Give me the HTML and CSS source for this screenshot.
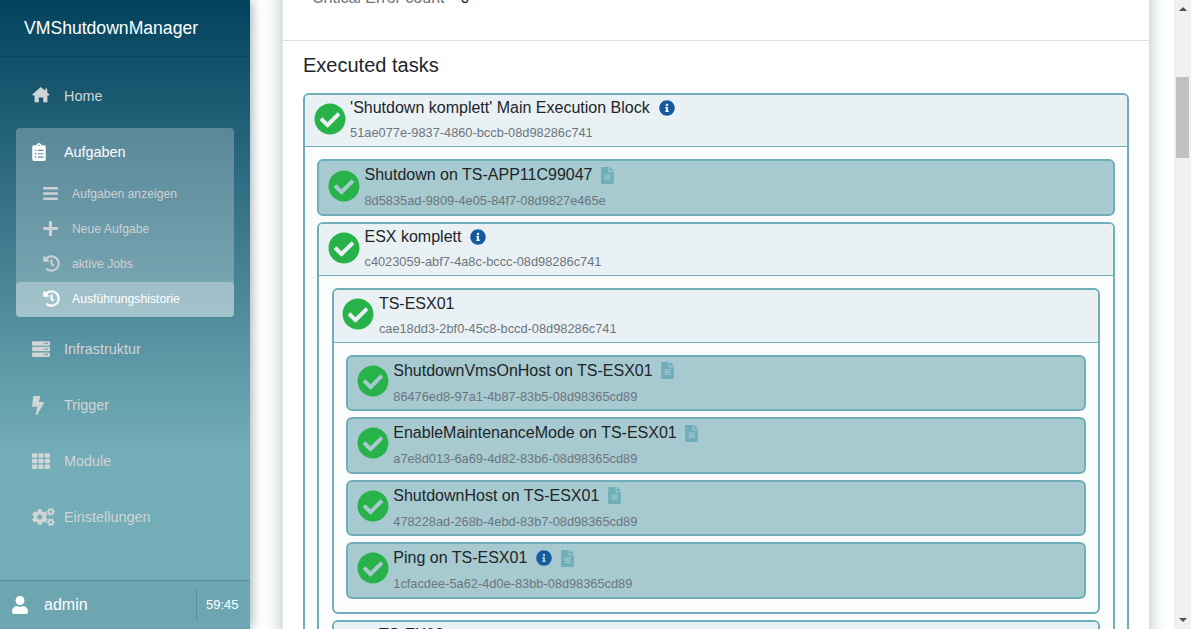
FILE: index.html
```html
<!DOCTYPE html>
<html lang="en">
<head>
<meta charset="utf-8">
<title>VMShutdownManager</title>
<link rel="stylesheet" href="styles.css">
</head>
<body>
<svg class="sprite" aria-hidden="true">
  <symbol id="i-check" viewBox="0 0 512 512"><path d="M504 256c0 136.967-111.033 248-248 248S8 392.967 8 256 119.033 8 256 8s248 111.033 248 248zM227.314 387.314l184-184c6.248-6.248 6.248-16.379 0-22.627l-22.627-22.627c-6.248-6.249-16.379-6.249-22.628 0L216 308.118l-70.059-70.059c-6.248-6.248-16.379-6.248-22.628 0l-22.627 22.627c-6.248 6.248-6.248 16.379 0 22.627l104 104c6.249 6.249 16.379 6.249 22.628.001z"/></symbol>
  <symbol id="i-info" viewBox="0 0 512 512"><path d="M256 8C119.043 8 8 119.083 8 256c0 136.997 111.043 248 248 248s248-111.003 248-248C504 119.083 392.957 8 256 8zm0 110c23.196 0 42 18.804 42 42s-18.804 42-42 42-42-18.804-42-42 18.804-42 42-42zm56 254c0 6.627-5.373 12-12 12h-88c-6.627 0-12-5.373-12-12v-24c0-6.627 5.373-12 12-12h12v-64h-12c-6.627 0-12-5.373-12-12v-24c0-6.627 5.373-12 12-12h64c6.627 0 12 5.373 12 12v100h12c6.627 0 12 5.373 12 12v24z"/></symbol>
  <symbol id="i-file" viewBox="0 0 384 512"><path d="M224 136V0H24C10.7 0 0 10.7 0 24v464c0 13.3 10.7 24 24 24h336c13.3 0 24-10.7 24-24V160H248c-13.2 0-24-10.8-24-24zm64 236c0 6.6-5.4 12-12 12H108c-6.6 0-12-5.4-12-12v-8c0-6.6 5.4-12 12-12h168c6.6 0 12 5.4 12 12v8zm0-64c0 6.6-5.4 12-12 12H108c-6.6 0-12-5.4-12-12v-8c0-6.6 5.4-12 12-12h168c6.6 0 12 5.4 12 12v8zm0-72v8c0 6.6-5.4 12-12 12H108c-6.6 0-12-5.4-12-12v-8c0-6.6 5.4-12 12-12h168c6.6 0 12 5.4 12 12zm96-114.1v6.1H256V0h6.1c6.4 0 12.5 2.5 17 7l97.9 98c4.5 4.5 7 10.6 7 16.9z"/></symbol>
  <symbol id="i-home" viewBox="0 0 18 18"><path d="M8.8 1 13.3 4.8V2.5H15.2V6.4L17.6 8.6 16.6 9.4H15.4V16.3H11.2V11.6H6.8V16.3H2.6V9.4H1.2L.3 8.6Z"/></symbol>
  <symbol id="i-clip" viewBox="0 0 384 512"><path d="M336 64h-80c0-35.3-28.7-64-64-64s-64 28.7-64 64H48C21.5 64 0 85.5 0 112v352c0 26.5 21.5 48 48 48h288c26.5 0 48-21.5 48-48V112c0-26.5-21.5-48-48-48zM96 424c-13.3 0-24-10.7-24-24s10.7-24 24-24 24 10.7 24 24-10.7 24-24 24zm0-96c-13.3 0-24-10.7-24-24s10.7-24 24-24 24 10.7 24 24-10.7 24-24 24zm0-96c-13.3 0-24-10.7-24-24s10.7-24 24-24 24 10.7 24 24-10.7 24-24 24zm96-192c13.3 0 24 10.7 24 24s-10.7 24-24 24-24-10.7-24-24 10.7-24 24-24zm128 368c0 4.4-3.6 8-8 8H168c-4.4 0-8-3.6-8-8v-16c0-4.4 3.6-8 8-8h144c4.4 0 8 3.6 8 8v16zm0-96c0 4.4-3.6 8-8 8H168c-4.4 0-8-3.6-8-8v-16c0-4.4 3.6-8 8-8h144c4.4 0 8 3.6 8 8v16zm0-96c0 4.4-3.6 8-8 8H168c-4.4 0-8-3.6-8-8v-16c0-4.4 3.6-8 8-8h144c4.4 0 8 3.6 8 8v16z"/></symbol>
  <symbol id="i-bars" viewBox="0 0 448 512"><path d="M16 132h416c8.837 0 16-7.163 16-16V76c0-8.837-7.163-16-16-16H16C7.163 60 0 67.163 0 76v40c0 8.837 7.163 16 16 16zm0 160h416c8.837 0 16-7.163 16-16v-40c0-8.837-7.163-16-16-16H16c-8.837 0-16 7.163-16 16v40c0 8.837 7.163 16 16 16zm0 160h416c8.837 0 16-7.163 16-16v-40c0-8.837-7.163-16-16-16H16c-8.837 0-16 7.163-16 16v40c0 8.837 7.163 16 16 16z"/></symbol>
  <symbol id="i-plus" viewBox="0 0 448 512"><path d="M416 208H272V64c0-17.67-14.33-32-32-32h-32c-17.67 0-32 14.33-32 32v144H32c-17.67 0-32 14.33-32 32v32c0 17.67 14.33 32 32 32h144v144c0 17.67 14.33 32 32 32h32c17.67 0 32-14.33 32-32V304h144c17.67 0 32-14.33 32-32v-32c0-17.67-14.33-32-32-32z"/></symbol>
  <symbol id="i-history" viewBox="0 0 512 512"><path d="M504 255.531c.253 136.64-111.18 248.372-247.82 248.468-59.015.042-113.223-20.53-155.822-54.911-11.077-8.94-11.905-25.541-1.839-35.607l11.267-11.267c8.609-8.609 22.353-9.551 31.891-1.984C173.062 425.135 212.781 440 256 440c101.705 0 184-82.311 184-184 0-101.705-82.311-184-184-184-48.814 0-93.149 18.969-126.068 49.932l50.754 50.754c10.08 10.08 2.941 27.314-11.313 27.314H24c-8.837 0-16-7.163-16-16V38.627c0-14.254 17.234-21.393 27.314-11.314l49.372 49.372C129.209 34.136 189.552 8 256 8c136.81 0 247.747 110.78 248 247.531zm-180.912 78.784l9.823-12.63c8.138-10.463 6.253-25.542-4.21-33.679L288 256.349V152c0-13.255-10.745-24-24-24h-16c-13.255 0-24 10.745-24 24v135.651l65.409 50.874c10.463 8.137 25.541 6.253 33.679-4.21z"/></symbol>
  <symbol id="i-server" viewBox="0 0 512 512"><path d="M480 160H32c-17.673 0-32-14.327-32-32V64c0-17.673 14.327-32 32-32h448c17.673 0 32 14.327 32 32v64c0 17.673-14.327 32-32 32zm-48-88c-13.255 0-24 10.745-24 24s10.745 24 24 24 24-10.745 24-24-10.745-24-24-24zm-64 0c-13.255 0-24 10.745-24 24s10.745 24 24 24 24-10.745 24-24-10.745-24-24-24zm112 248H32c-17.673 0-32-14.327-32-32v-64c0-17.673 14.327-32 32-32h448c17.673 0 32 14.327 32 32v64c0 17.673-14.327 32-32 32zm-48-88c-13.255 0-24 10.745-24 24s10.745 24 24 24 24-10.745 24-24-10.745-24-24-24zm-64 0c-13.255 0-24 10.745-24 24s10.745 24 24 24 24-10.745 24-24-10.745-24-24-24zm112 248H32c-17.673 0-32-14.327-32-32v-64c0-17.673 14.327-32 32-32h448c17.673 0 32 14.327 32 32v64c0 17.673-14.327 32-32 32zm-48-88c-13.255 0-24 10.745-24 24s10.745 24 24 24 24-10.745 24-24-10.745-24-24-24zm-64 0c-13.255 0-24 10.745-24 24s10.745 24 24 24 24-10.745 24-24-10.745-24-24-24z"/></symbol>
  <symbol id="i-bolt" viewBox="0 0 320 512"><path d="M296 160H180.6l42.6-129.8C227.2 15 215.7 0 200 0H56C44 0 33.8 8.9 32.2 20.8l-32 240C-1.7 275.2 9.5 288 24 288h118.7L96.6 482.5c-3.6 15.2 8 29.5 23.3 29.5 8.4 0 16.4-4.4 20.8-12l176-304c9.3-15.9-2.2-36-20.7-36z"/></symbol>
  <symbol id="i-th" viewBox="0 0 512 512"><path d="M149.333 56v80c0 13.255-10.745 24-24 24H24c-13.255 0-24-10.745-24-24V56c0-13.255 10.745-24 24-24h101.333c13.255 0 24 10.745 24 24zm181.334 240v-80c0-13.255-10.745-24-24-24H205.333c-13.255 0-24 10.745-24 24v80c0 13.255 10.745 24 24 24h101.333c13.256 0 24.001-10.745 24.001-24zm32-240v80c0 13.255 10.745 24 24 24H488c13.255 0 24-10.745 24-24V56c0-13.255-10.745-24-24-24H386.667c-13.255 0-24 10.745-24 24zm-32 80V56c0-13.255-10.745-24-24-24H205.333c-13.255 0-24 10.745-24 24v80c0 13.255 10.745 24 24 24h101.333c13.256 0 24.001-10.745 24.001-24zm-205.334 56H24c-13.255 0-24 10.745-24 24v80c0 13.255 10.745 24 24 24h101.333c13.255 0 24-10.745 24-24v-80c0-13.255-10.745-24-24-24zM0 376v80c0 13.255 10.745 24 24 24h101.333c13.255 0 24-10.745 24-24v-80c0-13.255-10.745-24-24-24H24c-13.255 0-24 10.745-24 24zm386.667-56H488c13.255 0 24-10.745 24-24v-80c0-13.255-10.745-24-24-24H386.667c-13.255 0-24 10.745-24 24v80c0 13.255 10.745 24 24 24zm0 160H488c13.255 0 24-10.745 24-24v-80c0-13.255-10.745-24-24-24H386.667c-13.255 0-24 10.745-24 24v80c0 13.255 10.745 24 24 24zM181.333 376v80c0 13.255 10.745 24 24 24h101.333c13.255 0 24-10.745 24-24v-80c0-13.255-10.745-24-24-24H205.333c-13.255 0-24 10.745-24 24z"/></symbol>
  <symbol id="i-cogs" viewBox="0 0 640 512"><path d="M512.1 191l-8.2 14.3c-3 5.3-9.4 7.5-15.1 5.4-11.8-4.4-22.6-10.7-32.1-18.6-4.6-3.8-5.8-10.5-2.8-15.7l8.2-14.3c-6.9-8-12.3-17.3-15.9-27.4h-16.5c-6 0-11.2-4.3-12.2-10.3-2-12-2.1-24.6 0-37.1 1-6 6.2-10.4 12.2-10.4h16.5c3.6-10.1 9-19.4 15.9-27.4l-8.2-14.3c-3-5.2-1.9-11.9 2.8-15.7 9.5-7.9 20.4-14.2 32.1-18.6 5.7-2.1 12.1.1 15.1 5.4l8.2 14.3c10.5-1.9 21.2-1.9 31.7 0L552 6.3c3-5.3 9.4-7.5 15.1-5.4 11.8 4.4 22.6 10.7 32.1 18.6 4.6 3.8 5.8 10.5 2.8 15.7l-8.2 14.3c6.9 8 12.3 17.3 15.9 27.4h16.5c6 0 11.2 4.3 12.2 10.3 2 12 2.1 24.6 0 37.1-1 6-6.2 10.4-12.2 10.4h-16.5c-3.6 10.1-9 19.4-15.9 27.4l8.2 14.3c3 5.2 1.9 11.9-2.8 15.7-9.5 7.9-20.4 14.2-32.1 18.6-5.7 2.1-12.1-.1-15.1-5.4l-8.2-14.3c-10.4 1.9-21.2 1.9-31.7 0zm-10.5-58.8c38.5 29.6 82.4-14.3 52.8-52.8-38.5-29.7-82.4 14.3-52.8 52.8zM386.3 286.1l33.7 16.8c10.1 5.8 14.5 18.1 10.5 29.1-8.9 24.2-26.4 46.4-42.6 65.8-7.4 8.9-20.2 11.1-30.3 5.3l-29.1-16.8c-16 13.7-34.6 24.6-54.9 31.7v33.6c0 11.6-8.3 21.6-19.7 23.6-24.6 4.2-50.4 4.4-75.9 0-11.5-2-20-11.9-20-23.6V418c-20.3-7.2-38.9-18-54.9-31.7L74 403c-10 5.8-22.9 3.6-30.3-5.3-16.2-19.4-33.3-41.6-42.2-65.7-4-10.9.4-23.2 10.5-29.1l33.3-16.8c-3.9-20.9-3.9-42.4 0-63.4L12 205.8c-10.1-5.8-14.6-18.1-10.5-29 8.9-24.2 26-46.4 42.2-65.8 7.4-8.9 20.2-11.1 30.3-5.3l29.1 16.8c16-13.7 34.6-24.6 54.9-31.7V57.1c0-11.5 8.2-21.5 19.6-23.5 24.6-4.2 50.5-4.4 76-.1 11.5 2 20 11.9 20 23.6v33.6c20.3 7.2 38.9 18 54.9 31.7l29.1-16.8c10-5.8 22.9-3.6 30.3 5.3 16.2 19.4 33.2 41.6 42.1 65.8 4 10.9.1 23.2-10 29.1l-33.7 16.8c3.9 21 3.9 42.5 0 63.5zm-117.6 21.1c59.2-77-28.7-164.9-105.7-105.7-59.2 77 28.7 164.9 105.7 105.7zm243.4 182.7l-8.2 14.3c-3 5.3-9.4 7.5-15.1 5.4-11.8-4.4-22.6-10.7-32.1-18.6-4.6-3.8-5.8-10.5-2.8-15.7l8.2-14.3c-6.9-8-12.3-17.3-15.9-27.4h-16.5c-6 0-11.2-4.3-12.2-10.3-2-12-2.1-24.6 0-37.1 1-6 6.2-10.4 12.2-10.4h16.5c3.6-10.1 9-19.4 15.9-27.4l-8.2-14.3c-3-5.2-1.9-11.9 2.8-15.7 9.5-7.9 20.4-14.2 32.1-18.6 5.7-2.1 12.1.1 15.1 5.4l8.2 14.3c10.5-1.9 21.2-1.9 31.7 0l8.2-14.3c3-5.3 9.4-7.5 15.1-5.4 11.8 4.4 22.6 10.7 32.1 18.6 4.6 3.8 5.8 10.5 2.8 15.7l-8.2 14.3c6.9 8 12.3 17.3 15.9 27.4h16.5c6 0 11.2 4.3 12.2 10.3 2 12 2.1 24.6 0 37.1-1 6-6.2 10.4-12.2 10.4h-16.5c-3.6 10.1-9 19.4-15.9 27.4l8.2 14.3c3 5.2 1.9 11.9-2.8 15.7-9.5 7.9-20.4 14.2-32.1 18.6-5.7 2.1-12.1-.1-15.1-5.4l-8.2-14.3c-10.4 1.9-21.2 1.9-31.7 0zM501.6 431c38.5 29.6 82.4-14.3 52.8-52.8-38.5-29.6-82.4 14.3-52.8 52.8z"/></symbol>
  <symbol id="i-user" viewBox="0 0 448 512"><path d="M224 256c70.7 0 128-57.3 128-128S294.7 0 224 0 96 57.3 96 128s57.3 128 128 128zm89.6 32h-16.7c-22.2 10.2-46.9 16-72.9 16s-50.6-5.8-72.9-16h-16.7C60.2 288 0 348.2 0 422.4V464c0 26.5 21.5 48 48 48h352c26.5 0 48-21.5 48-48v-41.6c0-74.2-60.2-134.4-134.4-134.4z"/></symbol>
</svg>

<div class="app">
  <aside class="sidebar">
    <header class="brand">VMShutdownManager</header>
    <nav class="nav">
      <a class="nav-item"><span class="nav-slot"><svg class="nav-icon ico-home"><use href="#i-home"/></svg></span><span>Home</span></a>
      <div class="nav-group">
        <a class="nav-item nav-item-open"><span class="nav-slot"><svg class="nav-icon ico-clip"><use href="#i-clip"/></svg></span><span>Aufgaben</span></a>
        <a class="sub-item"><span class="sub-slot"><svg class="sub-icon"><use href="#i-bars"/></svg></span><span>Aufgaben anzeigen</span></a>
        <a class="sub-item"><span class="sub-slot"><svg class="sub-icon"><use href="#i-plus"/></svg></span><span>Neue Aufgabe</span></a>
        <a class="sub-item"><span class="sub-slot"><svg class="sub-icon ico-history"><use href="#i-history"/></svg></span><span>aktive Jobs</span></a>
        <a class="sub-item sub-item-active"><span class="sub-slot"><svg class="sub-icon ico-history"><use href="#i-history"/></svg></span><span>Ausführungshistorie</span></a>
      </div>
      <a class="nav-item"><span class="nav-slot"><svg class="nav-icon ico-square"><use href="#i-server"/></svg></span><span>Infrastruktur</span></a>
      <a class="nav-item"><span class="nav-slot"><svg class="nav-icon ico-bolt"><use href="#i-bolt"/></svg></span><span>Trigger</span></a>
      <a class="nav-item"><span class="nav-slot"><svg class="nav-icon ico-square"><use href="#i-th"/></svg></span><span>Module</span></a>
      <a class="nav-item"><span class="nav-slot"><svg class="nav-icon ico-cogs"><use href="#i-cogs"/></svg></span><span>Einstellungen</span></a>
    </nav>
    <footer class="session">
      <svg class="session-icon"><use href="#i-user"/></svg>
      <span class="session-name">admin</span>
      <span class="session-time">59:45</span>
    </footer>
  </aside>

  <main class="main">
    <section class="card">
      <div class="summary"><span class="summary-label">Critical Error count</span><span class="summary-value">0</span></div>
      <div class="tasks">
        <h2 class="tasks-title">Executed tasks</h2>

        <div class="block">
          <div class="head">
            <svg class="check"><use href="#i-check"/></svg>
            <div class="text">
              <div class="title">'Shutdown komplett' Main Execution Block<svg class="info"><use href="#i-info"/></svg></div>
              <div class="uid">51ae077e-9837-4860-bccb-08d98286c741</div>
            </div>
          </div>
          <div class="body">
            <div class="leaf">
              <svg class="check"><use href="#i-check"/></svg>
              <div class="text">
                <div class="title">Shutdown on TS-APP11C99047<svg class="doc"><use href="#i-file"/></svg></div>
                <div class="uid">8d5835ad-9809-4e05-84f7-08d9827e465e</div>
              </div>
            </div>

            <div class="block">
              <div class="head">
                <svg class="check"><use href="#i-check"/></svg>
                <div class="text">
                  <div class="title">ESX komplett<svg class="info"><use href="#i-info"/></svg></div>
                  <div class="uid">c4023059-abf7-4a8c-bccc-08d98286c741</div>
                </div>
              </div>
              <div class="body">
                <div class="block">
                  <div class="head">
                    <svg class="check"><use href="#i-check"/></svg>
                    <div class="text">
                      <div class="title">TS-ESX01</div>
                      <div class="uid">cae18dd3-2bf0-45c8-bccd-08d98286c741</div>
                    </div>
                  </div>
                  <div class="body">
                    <div class="leaf">
                      <svg class="check"><use href="#i-check"/></svg>
                      <div class="text">
                        <div class="title">ShutdownVmsOnHost on TS-ESX01<svg class="doc"><use href="#i-file"/></svg></div>
                        <div class="uid">86476ed8-97a1-4b87-83b5-08d98365cd89</div>
                      </div>
                    </div>
                    <div class="leaf">
                      <svg class="check"><use href="#i-check"/></svg>
                      <div class="text">
                        <div class="title">EnableMaintenanceMode on TS-ESX01<svg class="doc"><use href="#i-file"/></svg></div>
                        <div class="uid">a7e8d013-6a69-4d82-83b6-08d98365cd89</div>
                      </div>
                    </div>
                    <div class="leaf">
                      <svg class="check"><use href="#i-check"/></svg>
                      <div class="text">
                        <div class="title">ShutdownHost on TS-ESX01<svg class="doc"><use href="#i-file"/></svg></div>
                        <div class="uid">478228ad-268b-4ebd-83b7-08d98365cd89</div>
                      </div>
                    </div>
                    <div class="leaf">
                      <svg class="check"><use href="#i-check"/></svg>
                      <div class="text">
                        <div class="title">Ping on TS-ESX01<svg class="info"><use href="#i-info"/></svg><svg class="doc"><use href="#i-file"/></svg></div>
                        <div class="uid">1cfacdee-5a62-4d0e-83bb-08d98365cd89</div>
                      </div>
                    </div>
                  </div>
                </div>
                <div class="block">
                  <div class="head">
                    <svg class="check"><use href="#i-check"/></svg>
                    <div class="text">
                      <div class="title">TS-EX02</div>
                      <div class="uid">cae18dd3-2bf0-45c8-bccd-08d98286c742</div>
                    </div>
                  </div>
                </div>
              </div>
            </div>
          </div>
        </div>
      </div>
    </section>
  </main>

  <div class="scrollbar">
    <span class="arrow arrow-up"></span>
    <div class="track"><div class="thumb"></div></div>
    <span class="arrow arrow-down"></span>
  </div>
</div>
</body>
</html>
```

FILE: styles.css
```css
* { box-sizing: border-box; }
html, body { margin: 0; height: 100%; overflow: hidden; }
body { font-family: "Liberation Sans", Arial, sans-serif; color: #212529; background: #fff; }
.sprite { display: none; }

.app { display: flex; height: 629px; }

/* Sidebar */
.sidebar {
  width: 250px; flex: none; display: flex; flex-direction: column; height: 100%;
  background: linear-gradient(180deg, #03425d 0%, #72adb8 72%, #72adb8 100%);
  box-shadow: 0 0 12px rgba(30, 70, 85, .55);
  position: relative; z-index: 2;
}
.brand {
  height: 57px; flex: none; padding: 18px 0 0 24px;
  color: #fff; font-size: 17.6px; line-height: 20px;
  border-bottom: 1px solid rgba(0, 0, 0, .12);
}
.nav { flex: 1; padding: 11px 16px 0; display: flex; flex-direction: column; }
.nav-item {
  display: flex; align-items: center; height: 56px; padding-left: 16px; flex: none;
  color: #d2d5d6; font-size: 14.4px;
}
.nav-slot { width: 32px; flex: none; display: flex; align-items: center; }
.nav-icon { height: 18px; fill: currentColor; display: block; }
.ico-home { width: 18px; margin-bottom: 3px; }
.ico-clip { width: 14px; }
.ico-square { width: 18px; }
.ico-bolt { width: 12px; height: 19px; }
.ico-cogs { width: 23px; }
.nav-group { background: rgba(255, 255, 255, .25); border-radius: 4px; margin: 4px 0; }
.nav-item-open { color: #fff; height: 49px; padding-bottom: 2px; }
.sub-item {
  display: flex; align-items: center; height: 35px; padding: 0 0 2px 27px;
  color: #cbd1d3; font-size: 12.2px; border-radius: 4px;
}
.sub-slot { width: 29px; flex: none; display: flex; align-items: center; }
.sub-icon { width: 15px; height: 17px; fill: currentColor; display: block; }
.ico-history { width: 17px; }
.sub-item-active { background: rgba(255, 255, 255, .3); color: #fff; }

.session {
  height: 49px; flex: none; display: flex; align-items: center;
  background: rgba(0, 0, 0, .035);
  border-top: 1px solid rgba(0, 0, 0, .18); color: #fff; padding-left: 12px;
}
.session-icon { width: 16px; height: 18px; fill: #fff; flex: none; margin-right: 16px; }
.session-name { font-size: 16px; flex: 1; }
.session-time {
  font-size: 13px; width: 54px; height: 30px; line-height: 30px; padding-left: 9px;
  border-left: 1px solid rgba(0, 0, 0, .16);
}

/* Main */
.main { flex: 1; min-width: 0; height: 100%; overflow: hidden; padding: 0 25px 0 32px; background: #fff; }
.card {
  margin-top: -40px; background: #fff; border-left: 1px solid #e3e6e8;
  box-shadow: 0 0 16px rgba(50, 85, 100, .38);
}
.summary { height: 81px; padding: 28px 0 0 29px; font-size: 16px; line-height: 20px; color: #6c757d; border-bottom: 1px solid #dedede; }
.summary-value { margin-left: 16px; color: #212529; }
.tasks { padding: 12px 20px 0; }
.tasks-title { margin: 0 0 16px; font-size: 20px; font-weight: 400; line-height: 24px; color: #212529; }

/* Task tree */
.block { border: 2px solid #70aeb9; border-radius: 6px; background: #fbfdfd; margin-bottom: 6px; }
.head { display: flex; align-items: center; height: 52.4px; padding-left: 8.5px; background: #e9f1f4; border-bottom: 1px solid #70aeb9; border-radius: 4px 4px 0 0; }
.body { padding: 12px 12.4px 0; }
.leaf { display: flex; align-items: center; height: 56.5px; margin-bottom: 6px; padding-left: 8.5px; background: #a6cacf; border: 2px solid #70aeb9; border-radius: 6px; }
.body > :last-child { margin-bottom: 12.9px; }
.check { width: 32px; height: 32px; flex: none; fill: #28b24a; margin: 0 4.6px 4px 0; }
.text { min-width: 0; padding-bottom: 2.6px; }
.title { display: flex; align-items: center; font-size: 16px; line-height: 24px; color: #212529; }
.uid { margin-top: 3px; font-size: 12.8px; line-height: 19px; color: #6c757d; }
.leaf .text { padding-bottom: 1.6px; }
.leaf .uid { margin-top: 4px; }
.info { width: 16px; height: 16px; fill: #15599f; flex: none; margin-left: 9px; }
.doc { width: 13px; height: 17px; fill: #70aeb9; flex: none; margin-left: 8.4px; }

/* Scrollbar */
.scrollbar { width: 17px; flex: none; height: 100%; background: #f1f1f1; display: flex; flex-direction: column; align-items: center; }
.arrow { flex: none; width: 0; height: 0; border-left: 4px solid transparent; border-right: 4px solid transparent; }
.arrow-up { border-bottom: 4px solid #505050; margin: 7px 0 6px; }
.arrow-down { border-top: 4px solid #505050; margin: 6px 0 7px; }
.track { flex: 1; width: 100%; padding: 60px 2px 0; }
.thumb { height: 81px; background: #c1c1c1; }
```
